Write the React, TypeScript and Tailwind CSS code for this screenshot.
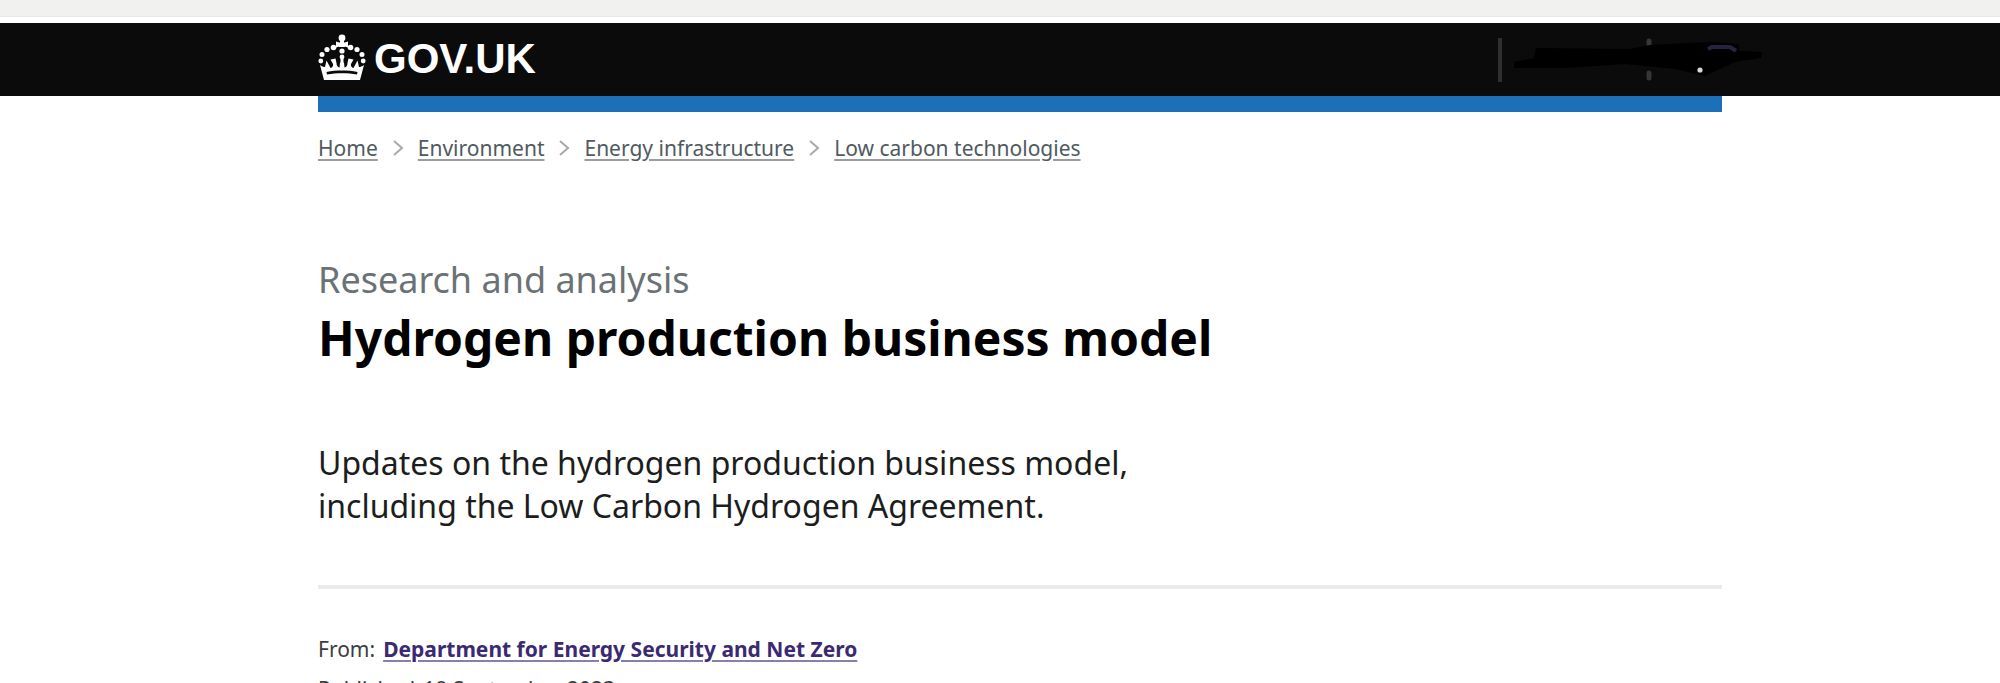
import { Fragment } from "react";

const breadcrumbs = ["Home", "Environment", "Energy infrastructure", "Low carbon technologies"];

function Crown() {
  return (
    <svg viewBox="0 0 48 46" className="h-[46px] w-12" fill="currentColor" aria-hidden="true">
      <circle cx="24" cy="4" r="3.4" />
      <path d="M22.500 5h3l1.500 8h-6z" />
      <path d="M18 7.500l5 1.500v3l-5 1.500zM30 7.500l-5 1.500v3l5 1.500z" />
      <circle cx="24" cy="17" r="2.600" />
      <circle cx="24" cy="23" r="2.400" />
      <path d="M22.500 25h3v8h-3z" />
      <circle cx="15.500" cy="13.500" r="2.800" />
      <circle cx="9" cy="15.500" r="2.600" />
      <circle cx="4" cy="20.500" r="2.500" />
      <circle cx="2.800" cy="27" r="2.400" />
      <circle cx="32.500" cy="13.500" r="2.800" />
      <circle cx="39" cy="15.500" r="2.600" />
      <circle cx="44" cy="20.500" r="2.500" />
      <circle cx="45.200" cy="27" r="2.400" />
      <path
        d="M2 31c2 1.500 3.600 2 5 2l1.500-6.500 4 7.500c2-.5 3-2 2.500-4l-2.500-4.500 5-1 1 4.500c0 2.500 1 4 3 4.500l.5-5h4l.5 5c2-.5 3-2 3-4.500l1-4.500 5 1-2.500 4.500c-.5 2 .5 3.500 2.500 4l4-7.500L41 33c1.400 0 3-.5 5-2l-4 15H6zM9 40.500c9.500-1.800 20.500-1.800 30 0l.5-2.500c-10-1.900-21-1.900-31 0z"
        fillRule="evenodd"
      />
    </svg>
  );
}

// blacked-out menu area at the right of the bar
function HeaderMenu() {
  return (
    <svg viewBox="0 0 270 50" className="-mr-10 h-[50px] w-[270px]" aria-hidden="true">
      <path d="M8 3v44" stroke="#2f2f2f" strokeWidth="4" />
      <path d="M157 6v3M157 38v5" stroke="#363636" strokeWidth="5" strokeLinecap="round" />
      <path
        d="M22 27l20-4 2-10 94 1 20-4 60-3 28 2 2 7 22 1-1 6-26 4-30 14-30-7-50-5-60 4H22z"
        fill="#000"
      />
      <path d="M216 14l4-2h18l6 4" stroke="#28223f" strokeWidth="4" fill="none" />
      <circle cx="208" cy="35" r="2.600" fill="#d8d8d8" />
    </svg>
  );
}

function Header() {
  return (
    <header>
      <div className="h-[17px] border-b border-[#e6e6e6] bg-[#f1f1f0]" />
      <div className="mt-1.5 bg-[#0b0b0b] pl-10">
        <div className="mx-auto max-w-[1404px]">
          <div className="flex h-[73px] items-center justify-between">
            <a href="#" className="flex items-center gap-2 pb-1.5 text-white">
              <Crown />
              <span className="pt-1 font-['Liberation_Sans',sans-serif] text-[42px] leading-[46px] font-bold">
                GOV.UK
              </span>
            </a>
            <HeaderMenu />
          </div>
        </div>
      </div>
    </header>
  );
}

function Breadcrumbs() {
  return (
    <nav aria-label="Breadcrumb" className="flex items-center gap-3 pt-[22px] text-[21px] leading-7 text-[#505a5f]">
      {breadcrumbs.map((crumb, index) => (
        <Fragment key={crumb}>
          {index > 0 && (
            <svg viewBox="0 0 16 16" className="size-4" fill="none" stroke="#a8a9aa" strokeWidth="2" aria-hidden="true">
              <path d="M4 1l8 7-8 7" />
            </svg>
          )}
          <a href="#" className="underline decoration-[#9a9c9d] decoration-2 underline-offset-3">
            {crumb}
          </a>
        </Fragment>
      ))}
    </nav>
  );
}

export default function App() {
  return (
    <div className="overflow-hidden bg-white font-['Noto_Sans',sans-serif] text-[#0b0c0c]">
      <Header />
      <div className="pl-10">
        <div className="mx-auto max-w-[1404px] border-t-[16px] border-[#1d70b8]">
          <Breadcrumbs />
          <main>
            <p className="mt-24 text-[36px] leading-[44px] text-[#6b7275]">Research and analysis</p>
            <h1 className="mt-1.5 text-[48px] leading-[60px] font-bold text-black">
              Hydrogen production business model
            </h1>
            <p className="mt-[73px] max-w-[860px] text-[32px] leading-[43px] text-[#1c1d1d]">
              Updates on the hydrogen production business model, including the Low Carbon Hydrogen Agreement.
            </p>
            <hr className="mt-[58px] border-t-4 border-[#ebebeb]" />
            <dl className="mt-10 text-[21px] leading-[40px] text-[#3c3e3f]">
              <div className="flex gap-2">
                <dt>From:</dt>
                <dd>
                  <a
                    href="#"
                    className="font-bold text-[#3b2a72] underline decoration-[#8a7fa8] decoration-2 underline-offset-3"
                  >
                    Department for Energy Security and Net Zero
                  </a>
                </dd>
              </div>
              <div className="flex gap-2">
                <dt>Published</dt>
                <dd>18 September 2023</dd>
              </div>
            </dl>
          </main>
        </div>
      </div>
    </div>
  );
}
